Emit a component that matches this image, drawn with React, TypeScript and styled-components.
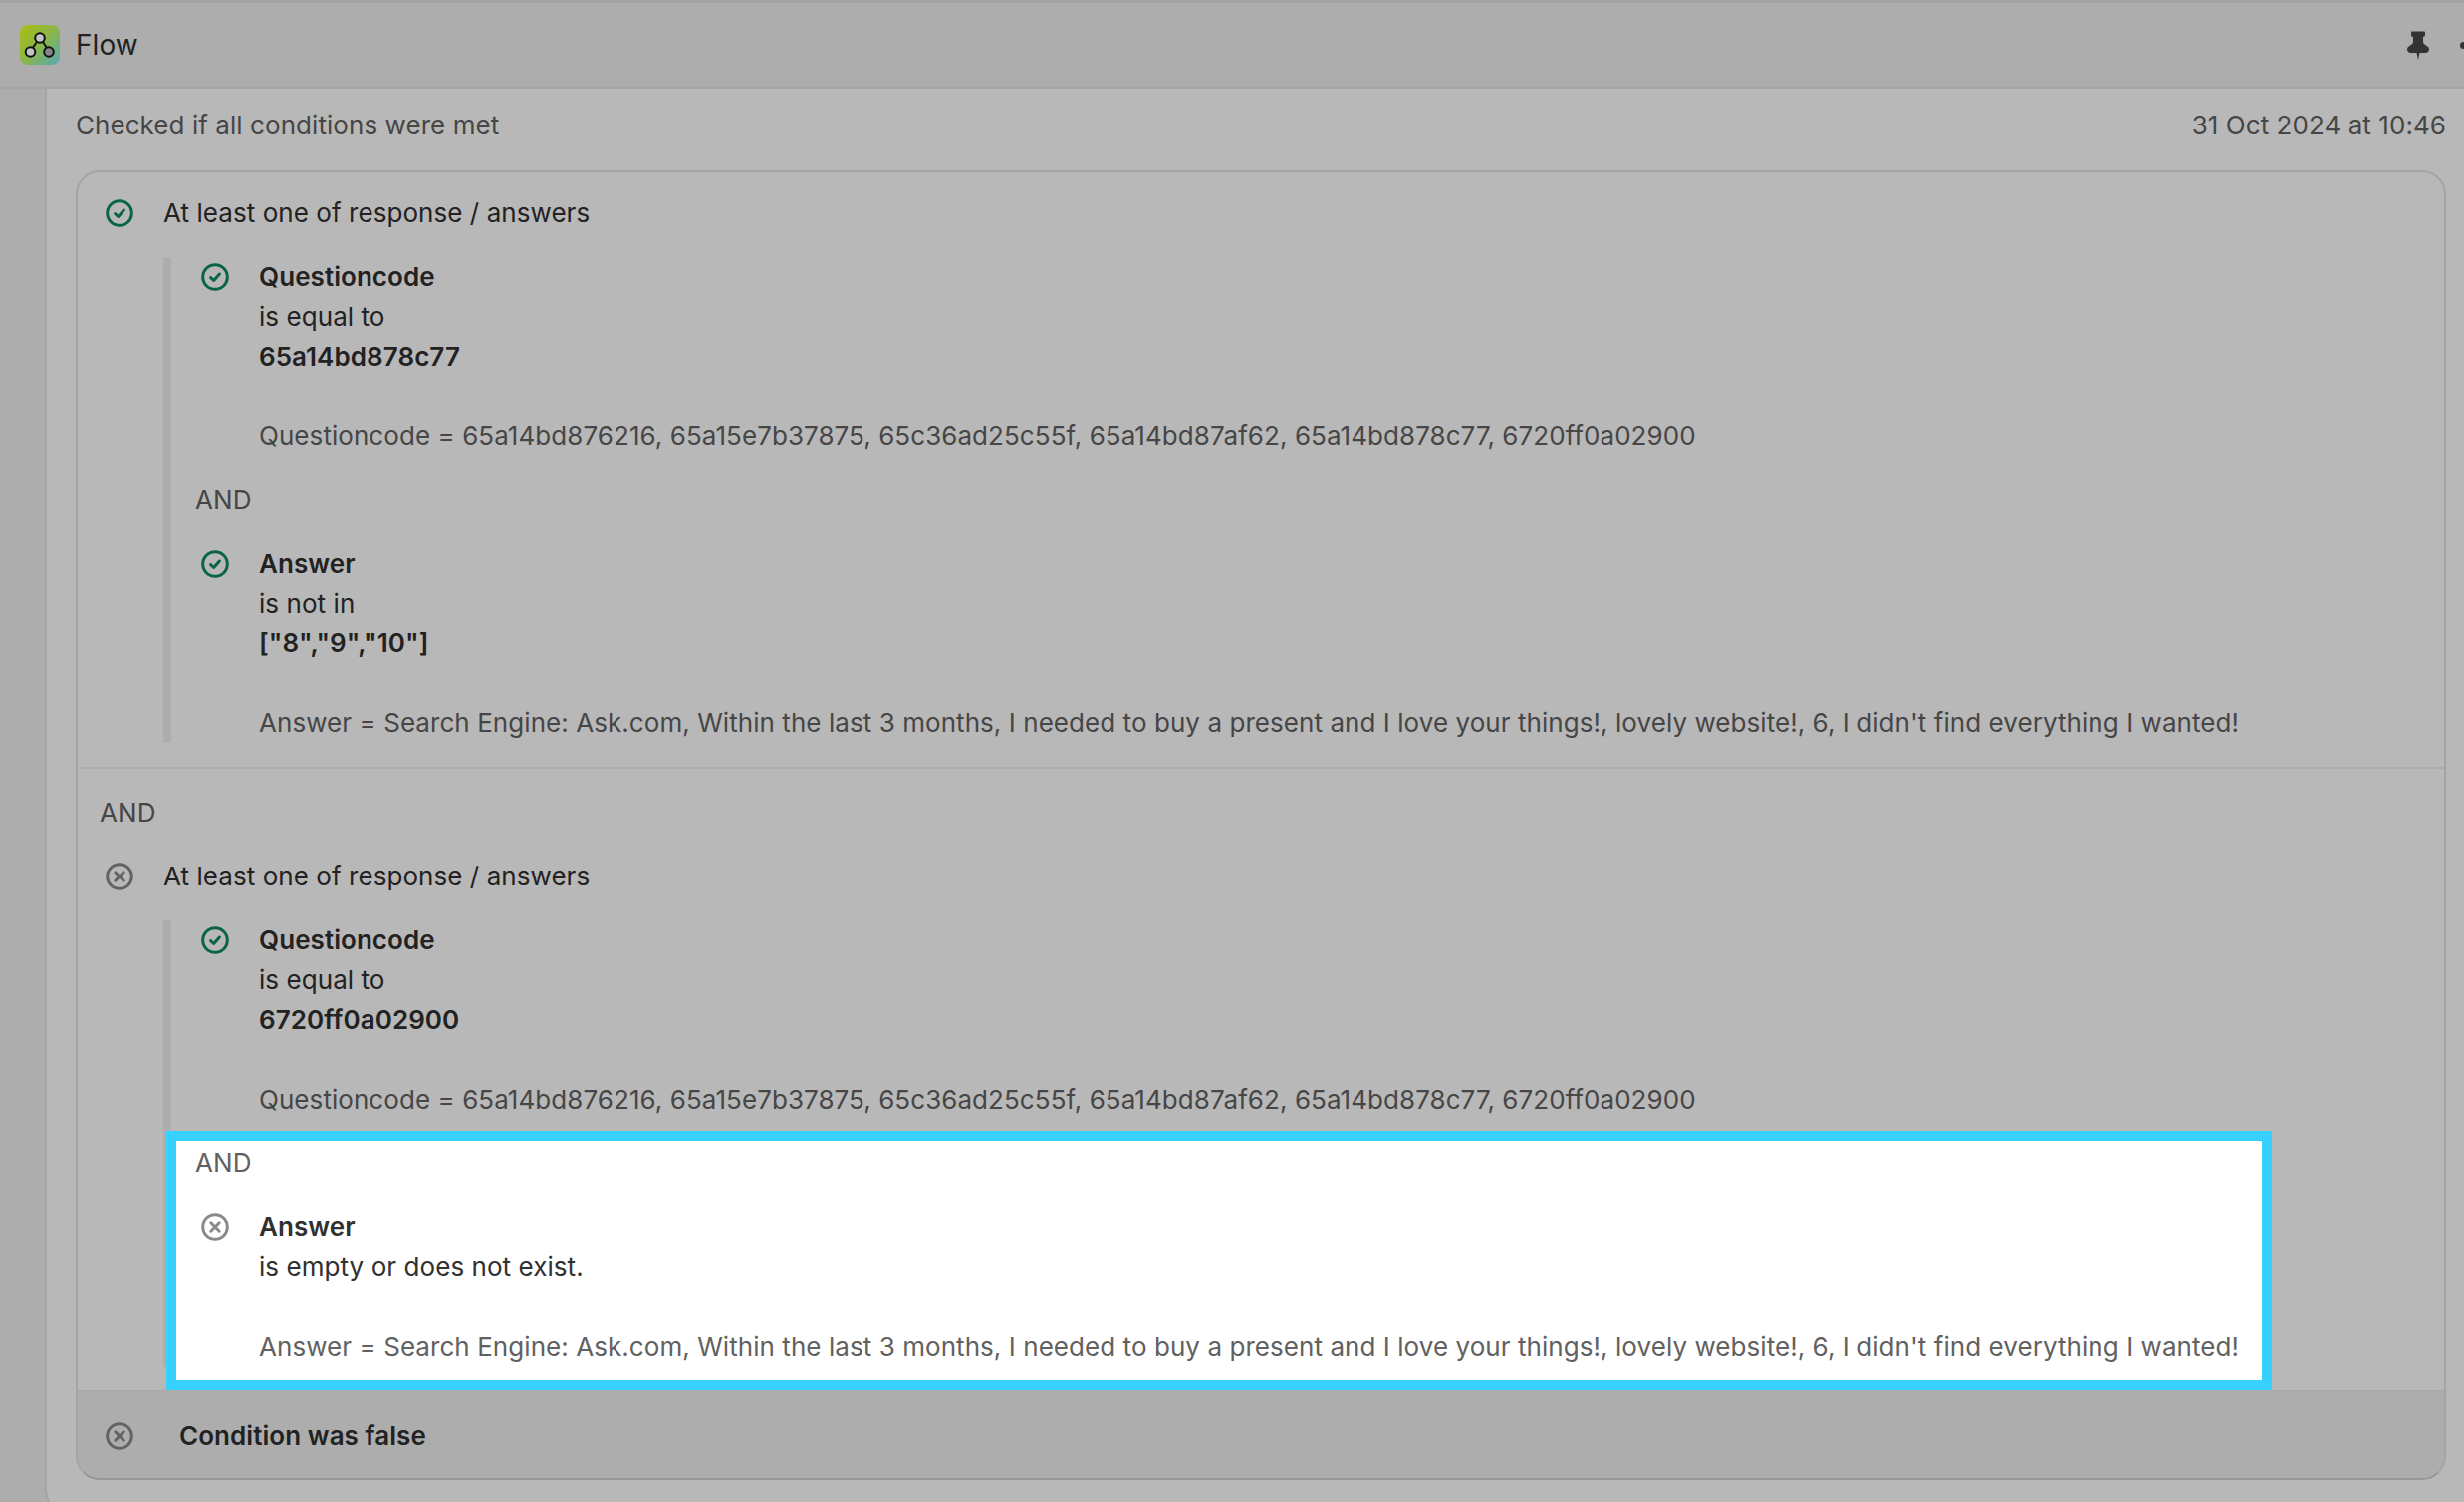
import React from "react";
import styled, { createGlobalStyle } from "styled-components";

const Global = createGlobalStyle`
  html, body {
    margin: 0;
    padding: 0;
    background: #adadad;
    overflow: hidden;
  }
  * {
    box-sizing: border-box;
  }
`;

const Page = styled.div`
  width: 2474px;
  height: 1508px;
  overflow: hidden;
  background: #adadad;
  font-family: Inter, "Liberation Sans", sans-serif;
  font-size: 26px;
  line-height: 40px;
  letter-spacing: 0.06px;
  color: #222222;
`;

const TopBar = styled.header`
  height: 89px;
  display: flex;
  align-items: center;
  gap: 16px;
  padding: 0 0 0 20px;
  background: #adadad;
  border-top: 3px solid #a3a3a3;
  border-bottom: 2px solid #a5a5a5;
`;

const LogoBox = styled.div`
  width: 40px;
  height: 40px;
  border-radius: 8px;
  background: linear-gradient(135deg, #a9bf12 0%, #8ab648 50%, #55a9bb 100%);
  flex: none;
`;

const Title = styled.div`
  font-size: 28px;
  color: #222222;
`;

const Spacer = styled.div`
  flex: 1 1 auto;
`;

const PinSlot = styled.svg`
  flex: none;
  margin-right: 15px;
  fill: #333333;
`;

const MoreDot = styled.span`
  flex: none;
  width: 7px;
  height: 7px;
  margin-right: -3px;
  border-radius: 50%;
  background: #333333;
`;

const Panel = styled.main`
  margin-left: 45px;
  height: 1430px;
  padding: 17px 18px 0 29px;
  background: #b8b8b8;
  border-left: 2px solid #a5a5a5;
  border-bottom-left-radius: 24px;
`;

const Meta = styled.div`
  display: flex;
  justify-content: space-between;
  margin-bottom: 25px;
  color: #464646;
`;

const Card = styled.section`
  border: 2px solid #a5a5a5;
  border-bottom-color: #979797;
  border-radius: 24px;
  overflow: hidden;
`;

const Section = styled.div<{ $first?: boolean }>`
  display: flex;
  flex-direction: column;
  gap: 24px;
  padding: ${(p) => (p.$first ? "21px" : "24px")} 22px 24px;
  ${(p) => p.$first && "border-bottom: 2px solid #adadad;"}
`;

const Row = styled.div`
  display: grid;
  grid-template-columns: 40px 1fr;
  column-gap: 24px;
`;

const IconCell = styled.div`
  height: 40px;
  display: flex;
  align-items: center;
  justify-content: center;
`;

const Group = styled.div`
  margin-left: 64px;
  padding-left: 24px;
  border-left: 8px solid #adadad;
  display: flex;
  flex-direction: column;
  gap: 24px;
`;

const AndLabel = styled.div<{ $light?: boolean }>`
  color: ${(p) => (p.$light ? "#616161" : "#464646")};
`;

const Strong = styled.div<{ $light?: boolean }>`
  font-weight: 600;
  color: ${(p) => (p.$light ? "#303030" : "#222222")};
`;

const Plain = styled.div<{ $light?: boolean }>`
  color: ${(p) => (p.$light ? "#303030" : "#222222")};
`;

const Blank = styled.div`
  height: 40px;
`;

const Values = styled.div<{ $light?: boolean }>`
  white-space: nowrap;
  color: ${(p) => (p.$light ? "#616161" : "#464646")};
`;

const Highlight = styled.div`
  width: 2094px;
  margin: -2px 0 -14px -19px;
  padding: 2px 0 14px 19px;
  display: flex;
  flex-direction: column;
  gap: 24px;
  background: #ffffff;
  box-shadow: 0 0 0 10px #38d0ff;
`;

const Footer = styled.div`
  display: grid;
  grid-template-columns: 40px 1fr;
  column-gap: 40px;
  padding: 25px 22px 22px;
  background: #adadad;
  border-top: 1px solid #a8a8a8;
  font-weight: 600;
`;

const Mark = styled.svg<{ $color: string }>`
  fill: none;
  stroke: ${(p) => p.$color};
  stroke-width: 3;
  stroke-linecap: round;
  stroke-linejoin: round;
`;

function Logo() {
  return (
    <LogoBox>
      <svg width="40" height="40" viewBox="0 0 40 40">
        <path d="M17 17 L12 24 M23 17 L27 23" stroke="#111" strokeWidth="2" fill="none" />
        <circle cx="20" cy="13" r="4.8" fill="#c4c4c4" stroke="#111" strokeWidth="2" />
        <circle cx="10.5" cy="27" r="4.8" fill="#c4c4c4" stroke="#111" strokeWidth="2" />
        <circle cx="29" cy="27" r="4.8" fill="#85858c" stroke="#111" strokeWidth="2" />
      </svg>
    </LogoBox>
  );
}

function Pin() {
  return (
    <PinSlot width="22" height="29" viewBox="0 0 22 29">
      <path d="M5 0.5 Q4 0 4 2 V4 Q4 6 6 6 L6 11 Q6 13 3 14.5 Q0 16 0 18 Q0 22 4 22 H9.5 L11 29 L12.5 22 H18 Q22 22 22 18 Q22 16 19 14.5 Q16 13 16 11 V6 Q18 6 18 4 V2 Q18 0 17 0.5 Z" />
    </PinSlot>
  );
}

function Passed() {
  return (
    <Mark $color="#0a6448" width="28" height="28" viewBox="0 0 28 28">
      <circle cx="14" cy="14" r="12.3" />
      <path d="M9.6 14.6 L12.7 17.5 L18.4 11" />
    </Mark>
  );
}

function Failed({ color = "#636363" }: { color?: string }) {
  return (
    <Mark $color={color} width="28" height="28" viewBox="0 0 28 28">
      <circle cx="14" cy="14" r="12.3" />
      <path d="M9.8 9.8 L18.2 18.2 M18.2 9.8 L9.8 18.2" />
    </Mark>
  );
}

const QUESTION_VALUES =
  "Questioncode = 65a14bd876216, 65a15e7b37875, 65c36ad25c55f, 65a14bd87af62, 65a14bd878c77, 6720ff0a02900";
const ANSWER_VALUES =
  "Answer = Search Engine: Ask.com, Within the last 3 months, I needed to buy a present and I love your things!, lovely website!, 6, I didn't find everything I wanted!";

function Condition({
  field,
  operator,
  expected,
  values,
}: {
  field: string;
  operator: string;
  expected: string;
  values: string;
}) {
  return (
    <Row>
      <IconCell>
        <Passed />
      </IconCell>
      <div>
        <Strong>{field}</Strong>
        <Plain>{operator}</Plain>
        <Strong>{expected}</Strong>
        <Blank />
        <Values>{values}</Values>
      </div>
    </Row>
  );
}

export default function App() {
  return (
    <Page>
      <Global />
      <TopBar>
        <Logo />
        <Title>Flow</Title>
        <Spacer />
        <Pin />
        <MoreDot />
      </TopBar>
      <Panel>
        <Meta>
          <span>Checked if all conditions were met</span>
          <span>31 Oct 2024 at 10:46</span>
        </Meta>
        <Card>
          <Section $first>
            <Row>
              <IconCell>
                <Passed />
              </IconCell>
              <Plain>At least one of response / answers</Plain>
            </Row>
            <Group>
              <Condition
                field="Questioncode"
                operator="is equal to"
                expected="65a14bd878c77"
                values={QUESTION_VALUES}
              />
              <AndLabel>AND</AndLabel>
              <Condition
                field="Answer"
                operator="is not in"
                expected={'["8","9","10"]'}
                values={ANSWER_VALUES}
              />
            </Group>
          </Section>
          <Section>
            <AndLabel>AND</AndLabel>
            <Row>
              <IconCell>
                <Failed />
              </IconCell>
              <Plain>At least one of response / answers</Plain>
            </Row>
            <Group>
              <Condition
                field="Questioncode"
                operator="is equal to"
                expected="6720ff0a02900"
                values={QUESTION_VALUES}
              />
              <Highlight>
                <AndLabel $light>AND</AndLabel>
                <Row>
                  <IconCell>
                    <Failed color="#8a8a8a" />
                  </IconCell>
                  <div>
                    <Strong $light>Answer</Strong>
                    <Plain $light>is empty or does not exist.</Plain>
                    <Blank />
                    <Values $light>{ANSWER_VALUES}</Values>
                  </div>
                </Row>
              </Highlight>
            </Group>
          </Section>
          <Footer>
            <IconCell>
              <Failed />
            </IconCell>
            <span>Condition was false</span>
          </Footer>
        </Card>
      </Panel>
    </Page>
  );
}
